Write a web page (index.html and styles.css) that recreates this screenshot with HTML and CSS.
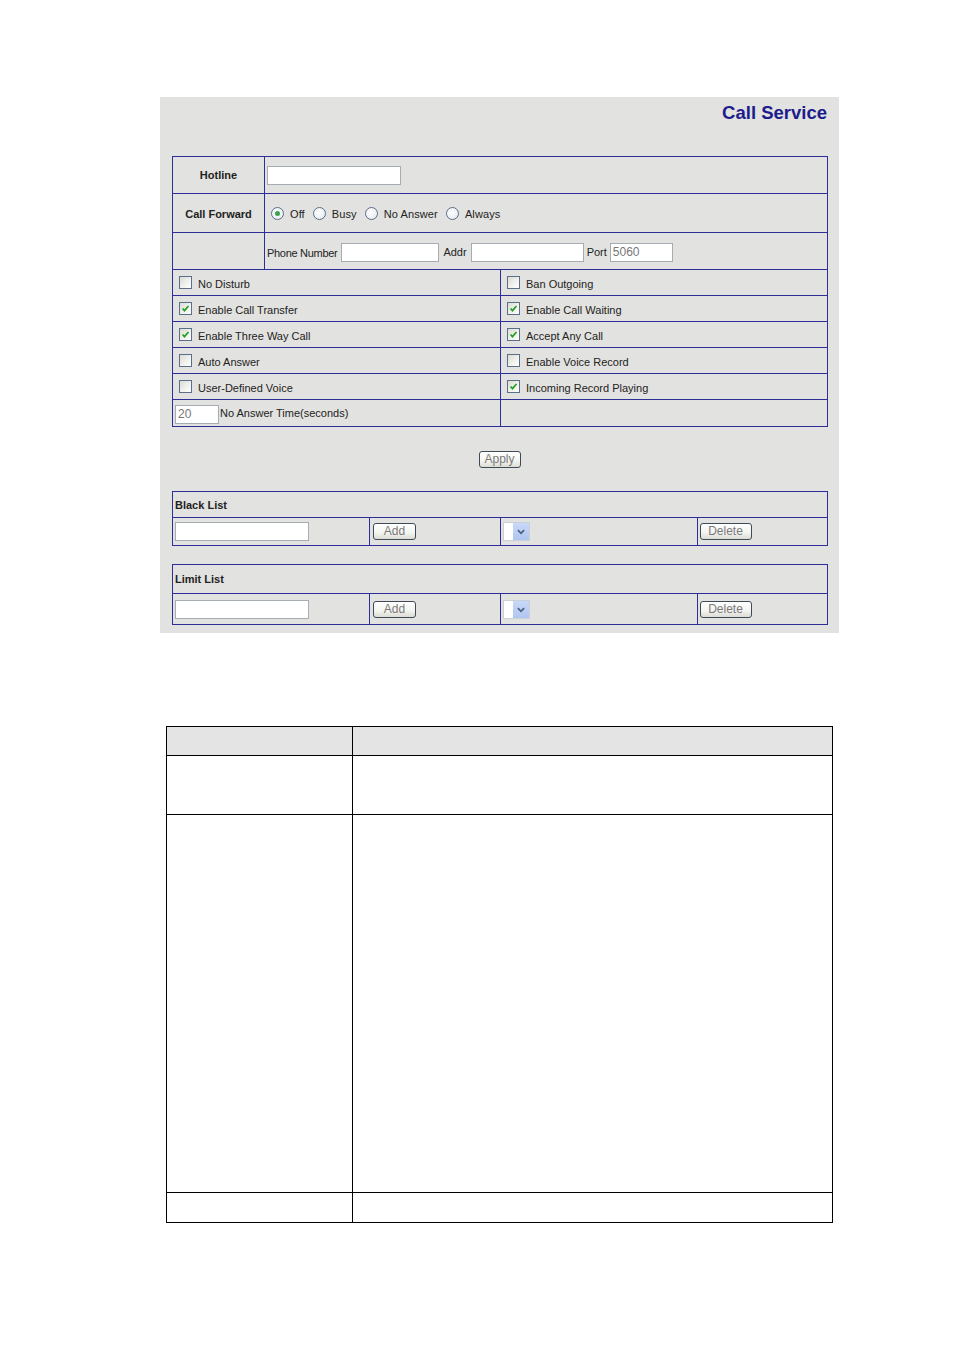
FILE: index.html
```html
<!DOCTYPE html>
<html>
<head>
<meta charset="utf-8">
<link rel="stylesheet" href="styles.css">
</head>
<body>
<div class="panel">
  <div class="title">Call Service</div>
  <table class="form">
    <colgroup><col class="c1"><col class="c2"><col class="c3"></colgroup>
    <tr class="r-hot">
      <td class="lbl">Hotline</td>
      <td colspan="2"><span class="inp w133"></span></td>
    </tr>
    <tr class="r-fwd">
      <td class="lbl">Call Forward</td>
      <td colspan="2" class="radios">
        <span class="rad on"></span><span class="rtxt">Off</span>
        <span class="rad"></span><span class="rtxt">Busy</span>
        <span class="rad"></span><span class="rtxt">No Answer</span>
        <span class="rad"></span><span class="rtxt">Always</span>
      </td>
    </tr>
    <tr class="r-phone">
      <td></td>
      <td colspan="2" class="phone">
        <span class="t pn">Phone Number</span><span class="inp w97 i1"></span><span class="t addr">Addr</span><span class="inp w112"></span><span class="t port">Port</span><span class="inp w62 val">5060</span>
      </td>
    </tr>
    <tr class="r-cb">
      <td colspan="2"><span class="cb"></span>No Disturb</td>
      <td><span class="cb"></span>Ban Outgoing</td>
    </tr>
    <tr class="r-cb">
      <td colspan="2"><span class="cb on"><svg viewBox="0 0 13 13"><path d="M3 6.5 L5.3 9 L10 3.6" /></svg></span>Enable Call Transfer</td>
      <td><span class="cb on"><svg viewBox="0 0 13 13"><path d="M3 6.5 L5.3 9 L10 3.6" /></svg></span>Enable Call Waiting</td>
    </tr>
    <tr class="r-cb">
      <td colspan="2"><span class="cb on"><svg viewBox="0 0 13 13"><path d="M3 6.5 L5.3 9 L10 3.6" /></svg></span>Enable Three Way Call</td>
      <td><span class="cb on"><svg viewBox="0 0 13 13"><path d="M3 6.5 L5.3 9 L10 3.6" /></svg></span>Accept Any Call</td>
    </tr>
    <tr class="r-cb">
      <td colspan="2"><span class="cb"></span>Auto Answer</td>
      <td><span class="cb"></span>Enable Voice Record</td>
    </tr>
    <tr class="r-cb">
      <td colspan="2"><span class="cb"></span>User-Defined Voice</td>
      <td><span class="cb on"><svg viewBox="0 0 13 13"><path d="M3 6.5 L5.3 9 L10 3.6" /></svg></span>Incoming Record Playing</td>
    </tr>
    <tr class="r-time">
      <td colspan="2" class="time"><span class="inp w43 val">20</span>No Answer Time(seconds)</td>
      <td></td>
    </tr>
  </table>

  <div class="apply-row"><span class="btn apply">Apply</span></div>

  <table class="list black">
    <colgroup><col class="l1"><col class="l2"><col class="l1"><col class="l2"></colgroup>
    <tr class="hd"><td colspan="4">Black List</td></tr>
    <tr class="rw">
      <td><span class="inp w133"></span></td>
      <td><span class="btn add">Add</span></td>
      <td><span class="sel"><span class="arrow"><svg viewBox="0 0 17 19"><path d="M5 8 L8.5 11.5 L12 8" /></svg></span></span></td>
      <td><span class="btn del">Delete</span></td>
    </tr>
  </table>

  <table class="list limit">
    <colgroup><col class="l1"><col class="l2"><col class="l1"><col class="l2"></colgroup>
    <tr class="hd"><td colspan="4">Limit List</td></tr>
    <tr class="rw">
      <td><span class="inp w133"></span></td>
      <td><span class="btn add">Add</span></td>
      <td><span class="sel"><span class="arrow"><svg viewBox="0 0 17 19"><path d="M5 8 L8.5 11.5 L12 8" /></svg></span></span></td>
      <td><span class="btn del">Delete</span></td>
    </tr>
  </table>
</div>

<table class="doc">
  <colgroup><col class="d1"><col class="d2"></colgroup>
  <tr class="dh"><td></td><td></td></tr>
  <tr class="d2r"><td></td><td></td></tr>
  <tr class="d3r"><td></td><td></td></tr>
  <tr class="d4r"><td></td><td></td></tr>
</table>
</body>
</html>
```

FILE: styles.css
```css
html, body {
  margin: 0;
  padding: 0;
  background: #ffffff;
}
body {
  font-family: "Liberation Sans", Arial, sans-serif;
  font-size: 11px;
  color: #222;
}

.panel {
  margin: 97px 0 0 160px;
  width: 679px;
  background: #e2e2e0;
  padding-bottom: 8px;
}

.title {
  font: bold 18.5px/22px "Liberation Sans", Arial, sans-serif;
  color: #1c1c8c;
  text-align: right;
  padding: 5px 12px 0 0;
}

table {
  border-collapse: collapse;
  table-layout: fixed;
}

.form {
  margin: 32px 0 0 12px;
  width: 655px;
}
.form col.c1 { width: 92px; }
.form col.c2 { width: 236px; }
.form col.c3 { width: 327px; }

.form td, .list td {
  border: 1px solid #2e2e98;
  padding: 0;
  vertical-align: middle;
  white-space: nowrap;
}

.form td.lbl {
  font-weight: bold;
  text-align: center;
  color: #222;
}

.r-hot td { height: 36px; }
.r-hot td + td { padding-left: 2px; }
.r-fwd td { height: 36px; padding-top: 2px; }
.r-phone td { height: 34px; padding-top: 2px; }
.r-cb td { height: 21px; padding-left: 6px; padding-top: 4px; }
.r-time td { height: 24px; padding-top: 2px; }

.inp {
  display: inline-block;
  vertical-align: middle;
  box-sizing: border-box;
  height: 19px;
  background: #fff;
  border: 1px solid #a5acb2;
  font-size: 12px;
  line-height: 17px;
  color: #777;
  padding-left: 2px;
}
.w133 { width: 134px; }
.w97 { width: 98px; }
.w112 { width: 113px; }
.w62 { width: 63px; }
.w43 { width: 44px; }

.radios { padding-left: 6px !important; }
.rad {
  display: inline-block;
  vertical-align: middle;
  box-sizing: border-box;
  width: 13px;
  height: 13px;
  border: 1px solid #5a6f8a;
  border-radius: 50%;
  background: radial-gradient(circle at 40% 40%, #ffffff 0%, #eef0f3 60%, #d8dde3 100%);
  position: relative;
  margin-right: 6px;
  top: -1px;
}
.rad.on::after {
  content: "";
  position: absolute;
  left: 3px;
  top: 3px;
  width: 5px;
  height: 5px;
  border-radius: 50%;
  background: #3aa548;
}
.rtxt {
  display: inline-block;
  vertical-align: middle;
  margin-right: 5px;
  letter-spacing: 0.1px;
}

.phone { padding-left: 2px !important; }
.phone .t { vertical-align: middle; }
.phone .t.pn { letter-spacing: -0.3px; }
.phone .inp.i1 { margin-left: 4px; }
.phone .t.addr { margin-left: 4px; margin-right: 4px; }
.phone .t.port { margin-left: 3px; margin-right: 3px; }

.cb {
  display: inline-block;
  vertical-align: middle;
  box-sizing: border-box;
  width: 13px;
  height: 13px;
  border: 1px solid #5a6f8a;
  background: linear-gradient(135deg, #dcdcd6 0%, #f2f2ee 60%, #ffffff 100%);
  margin-right: 6px;
  position: relative;
  top: -2px;
}
.cb svg {
  display: block;
  width: 11px;
  height: 11px;
  margin: 0;
}
.cb svg path {
  fill: none;
  stroke: #21a121;
  stroke-width: 2;
}

.time { padding-left: 2px !important; }
.time .inp { margin-right: 1px; }

.apply-row {
  margin-top: 24px;
  text-align: center;
  height: 17px;
}

.btn {
  display: inline-block;
  box-sizing: border-box;
  height: 17px;
  border: 1px solid #3f4a59;
  border-radius: 3px;
  background: linear-gradient(#ffffff 0%, #f3f3ef 60%, #dcdcd4 100%);
  color: #7a7a7a;
  font-size: 12px;
  line-height: 15px;
  text-align: center;
  vertical-align: middle;
}
.btn.apply { width: 42px; }
.btn.add { width: 43px; margin-left: 1px; }
.btn.del { width: 52px; }

.list {
  width: 655px;
  margin-left: 12px;
}
.list col.l1 { width: 197px; }
.list col.l2 { width: 130.5px; }
.list.black { margin-top: 23px; }
.list.limit { margin-top: 18px; }
.list .hd td {
  font-weight: bold;
  padding-left: 2px;
  color: #222;
}
.list .rw td { padding-left: 2px; }
.list.black .hd td { height: 25px; }
.list.black .rw td { height: 27px; }
.list.limit .hd td { height: 28px; }
.list.limit .rw td { height: 30px; }

.sel {
  display: inline-block;
  vertical-align: middle;
  box-sizing: border-box;
  width: 27px;
  height: 19px;
  background: #fff;
  border: 1px solid #c9d0d8;
  position: relative;
}
.sel .arrow {
  position: absolute;
  right: 0;
  top: 0;
  width: 16px;
  height: 17px;
  background: linear-gradient(#c8d8f8, #b0c6f0);
}
.sel .arrow svg {
  display: block;
  width: 16px;
  height: 17px;
}
.sel .arrow svg path {
  fill: none;
  stroke: #4d6185;
  stroke-width: 2;
}

.doc {
  margin: 93px 0 0 166px;
  width: 666px;
}
.doc col.d1 { width: 186px; }
.doc col.d2 { width: 480px; }
.doc td {
  border: 1.5px solid #000;
  padding: 0;
}
.doc .dh td { background: #e4e4e4; height: 28px; }
.doc .d2r td { height: 58px; }
.doc .d3r td { height: 377px; }
.doc .d4r td { height: 29px; }
```
